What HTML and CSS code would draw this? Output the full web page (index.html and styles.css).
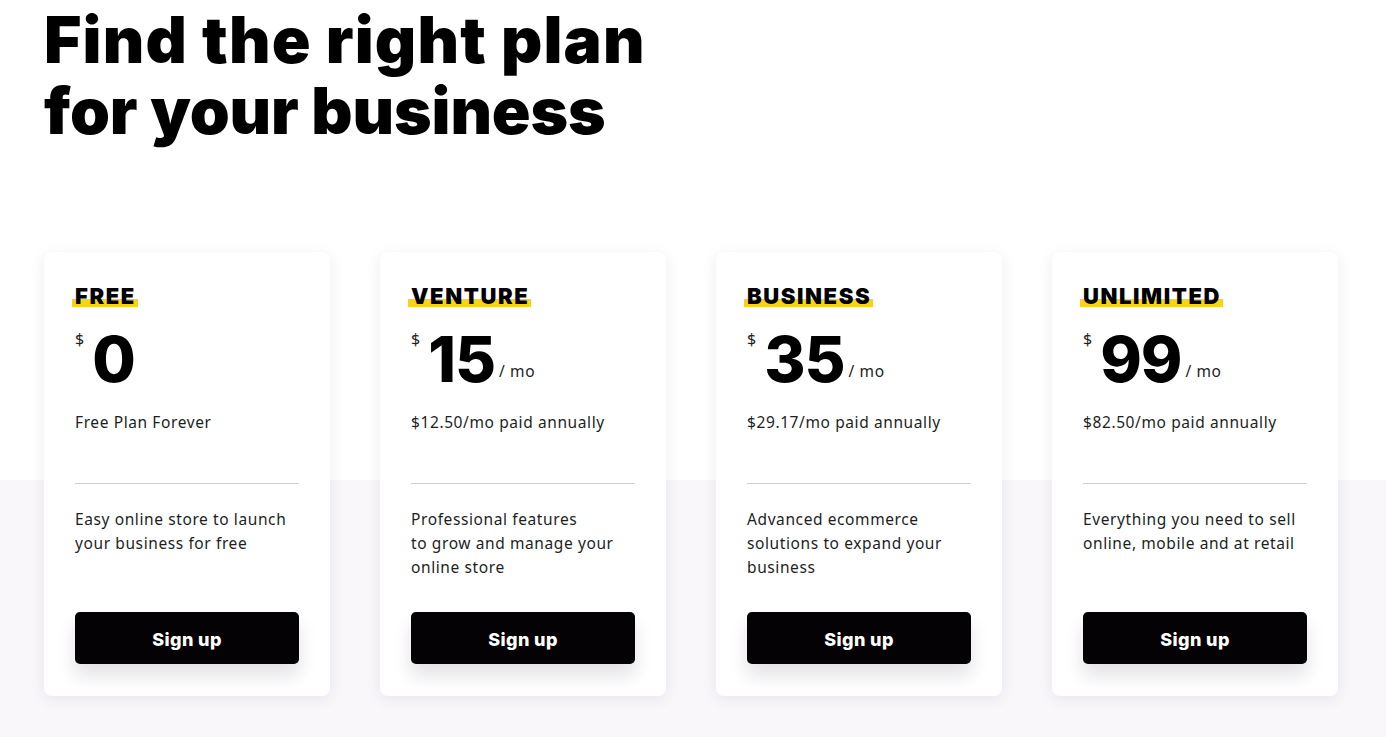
FILE: index.html
```html
<!DOCTYPE html>
<html lang="en">
<head>
<meta charset="utf-8">
<title>Pricing</title>
<link rel="stylesheet" href="styles.css">
</head>
<body>
<main class="page">
  <h1 class="headline"><span class="line">Find the right plan</span><span class="line line-2">for your business</span></h1>
  <section class="plans">
    <article class="card">
      <div class="card-top">
        <h2 class="plan-name"><span class="mark">FREE</span></h2>
        <div class="price"><span class="cur">$</span><span class="amount">0</span></div>
        <p class="note">Free Plan Forever</p>
      </div>
      <hr class="rule">
      <p class="desc">Easy online store to launch your business for free</p>
      <button class="signup">Sign up</button>
    </article>
    <article class="card">
      <div class="card-top">
        <h2 class="plan-name"><span class="mark">VENTURE</span></h2>
        <div class="price"><span class="cur">$</span><span class="amount">15</span><span class="per">/ mo</span></div>
        <p class="note">$12.50/mo paid annually</p>
      </div>
      <hr class="rule">
      <p class="desc">Professional features<br>to grow and manage your online store</p>
      <button class="signup">Sign up</button>
    </article>
    <article class="card">
      <div class="card-top">
        <h2 class="plan-name"><span class="mark">BUSINESS</span></h2>
        <div class="price"><span class="cur">$</span><span class="amount">35</span><span class="per">/ mo</span></div>
        <p class="note">$29.17/mo paid annually</p>
      </div>
      <hr class="rule">
      <p class="desc">Advanced ecommerce solutions to expand your business</p>
      <button class="signup">Sign up</button>
    </article>
    <article class="card">
      <div class="card-top">
        <h2 class="plan-name"><span class="mark">UNLIMITED</span></h2>
        <div class="price"><span class="cur">$</span><span class="amount">99</span><span class="per">/ mo</span></div>
        <p class="note">$82.50/mo paid annually</p>
      </div>
      <hr class="rule">
      <p class="desc">Everything you need to sell online, mobile and at retail</p>
      <button class="signup">Sign up</button>
    </article>
  </section>
</main>
</body>
</html>
```

FILE: styles.css
```css
* { box-sizing: border-box; }
html, body { margin: 0; padding: 0; }
body {
  background: linear-gradient(to bottom, #ffffff 0, #ffffff 480px, #f9f7fa 480px, #f9f7fa 100%);
  min-height: 737px;
  font-family: "Noto Sans", "Open Sans", sans-serif;
  color: #1e1e1e;
}
.page {
  padding: 0 48px 0 44px;
}
.headline {
  margin: 4px 0 0 0;
  font-family: Inter, "Noto Sans", sans-serif;
  font-weight: 900;
  font-size: 64px;
  line-height: 71px;
  letter-spacing: 1.2px;
  color: #000;
}
.line {
  display: block;
}
.line-2 {
  letter-spacing: -0.1px;
}
.plans {
  margin-top: 106px;
  display: grid;
  grid-template-columns: repeat(4, 286px);
  column-gap: 50px;
}
.card {
  height: 444px;
  background: #fff;
  border-radius: 8px;
  box-shadow: 0 3px 16px rgba(40, 20, 60, 0.08);
  padding: 0 31px;
  display: flex;
  flex-direction: column;
}
.card-top {
  height: 231px;
  padding-top: 31px;
}
.plan-name {
  margin: 0;
  font-family: Inter, sans-serif;
  font-weight: 900;
  font-size: 22px;
  line-height: 26px;
  letter-spacing: 1.6px;
  color: #000;
}
.mark {
  padding: 0 2px 0 3px;
  margin-left: -3px;
  background: linear-gradient(to bottom, transparent 0, transparent 62%, #f7d514 62%, #f7d514 94%, transparent 94%);
}
.price {
  margin-top: 20px;
  display: flex;
  align-items: baseline;
  height: 60px;
}
.cur {
  align-self: flex-start;
  font-size: 16px;
  line-height: 18px;
  margin-top: 1px;
  margin-right: 8px;
  color: #222;
}
.amount {
  font-family: Inter, sans-serif;
  font-weight: 800;
  font-size: 63px;
  line-height: 60px;
  letter-spacing: -1px;
  color: #000;
}
.per {
  align-self: flex-end;
  margin: 0 0 9px 4px;
  font-size: 15.5px;
  line-height: 18px;
  letter-spacing: 0.6px;
  color: #222;
}
.note {
  margin: 22px 0 0 0;
  font-size: 15.5px;
  line-height: 22px;
  letter-spacing: 0.6px;
  color: #1e1e1e;
}
.rule {
  margin: 0;
  border: 0;
  border-top: 1px solid #cfcdd2;
}
.desc {
  margin: 23px 0 0 0;
  height: 105px;
  font-size: 15.5px;
  line-height: 24px;
  letter-spacing: 0.6px;
  color: #1e1e1e;
}
.signup {
  height: 52px;
  width: 100%;
  border: 0;
  border-radius: 5px;
  padding-top: 3px;
  background: #050205;
  color: #fff;
  font-family: Inter, sans-serif;
  font-weight: 800;
  font-size: 18px;
  letter-spacing: 0.4px;
  box-shadow: 0 12px 18px rgba(30, 20, 40, 0.12);
  cursor: pointer;
}
```
